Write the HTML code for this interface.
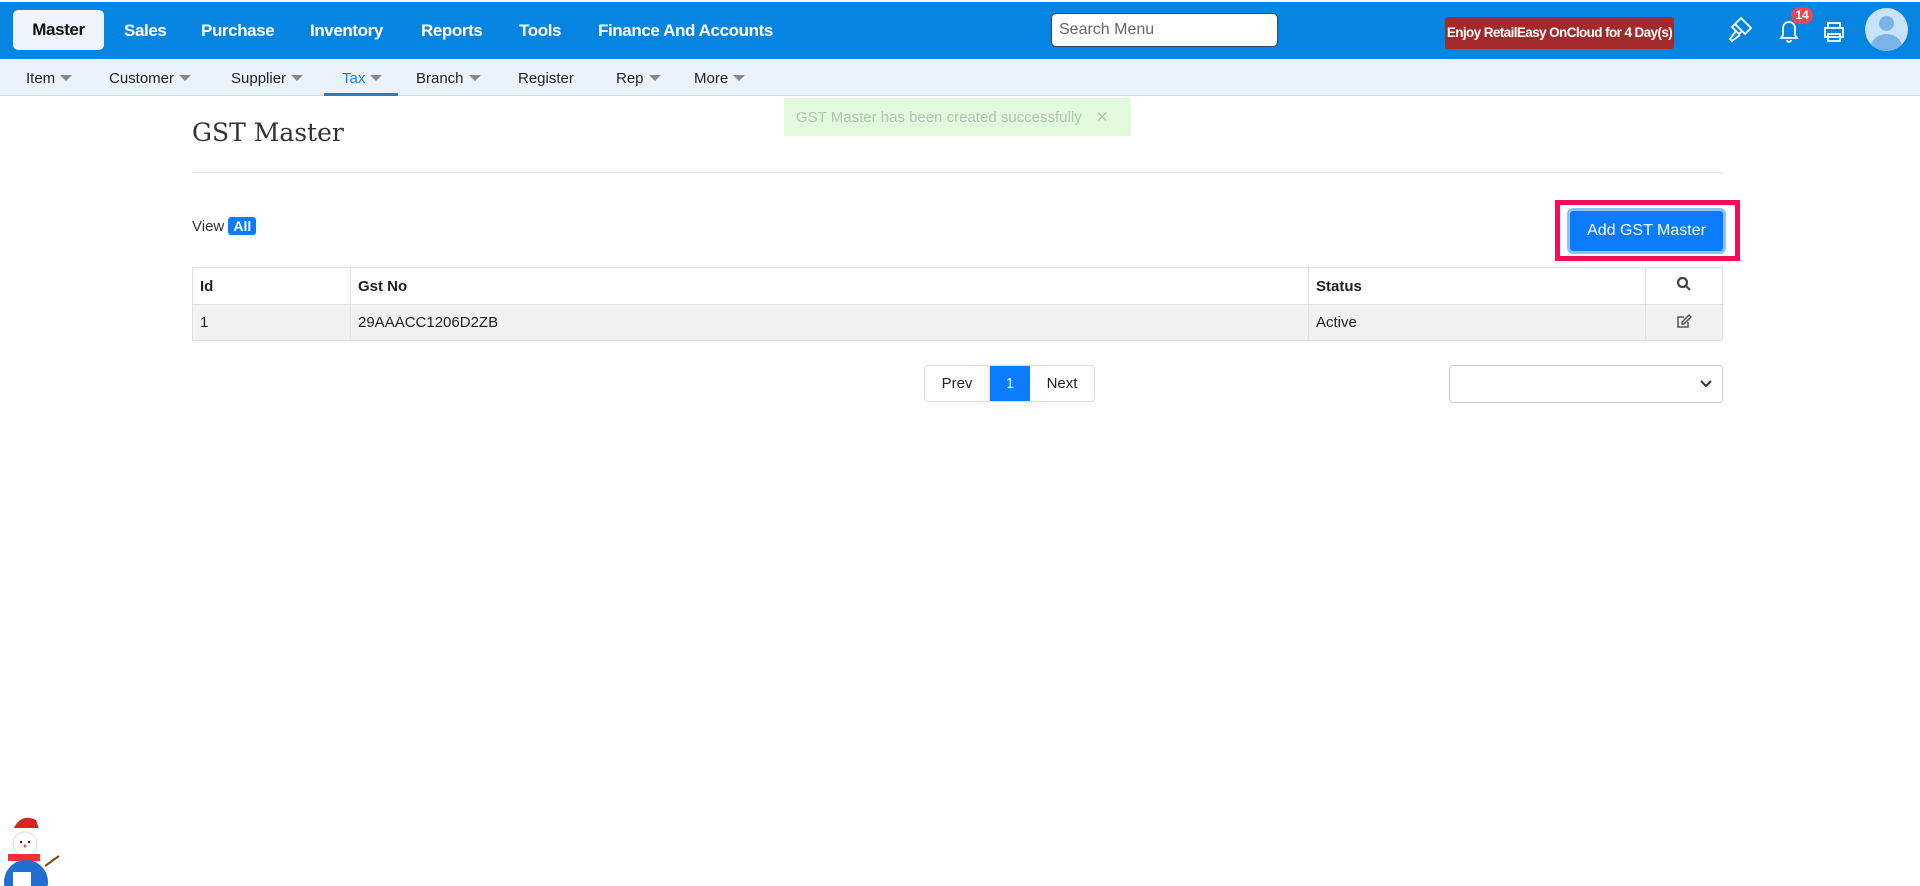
<!DOCTYPE html>
<html><head><meta charset="utf-8"><style>
*{box-sizing:border-box;margin:0;padding:0}
body{width:1920px;height:886px;position:relative;background:#fff;font-family:"Liberation Sans",sans-serif;overflow:hidden;color:#222}
.abs{position:absolute}
.top{left:0;top:2px;width:1920px;height:57px;background:#0684e2}
.nav{position:absolute;top:21px;font-size:17px;font-weight:bold;color:#fff;letter-spacing:-0.4px}
.master{left:13px;top:10px;width:91px;height:40px;background:#eef4fb;border-radius:5px;color:#111;font-weight:bold;font-size:17px;letter-spacing:-0.4px;text-align:center;line-height:40px}
.sub{left:0;top:59px;width:1920px;height:37px;background:#eaf3fc;border-bottom:1px solid #c7dced}
.si{position:absolute;top:70px;font-size:15px;color:#222}
.car{display:inline-block;width:0;height:0;border-left:6px solid transparent;border-right:6px solid transparent;border-top:6px solid #888;margin-left:5px;vertical-align:2px}
th,td{border:1px solid #dee2e6;text-align:left;font-size:15px;padding:0 7px}
</style></head><body>
<div class="abs top"></div>
<div class="abs master">Master</div>
<div class="nav" style="left:124px">Sales</div>
<div class="nav" style="left:201px">Purchase</div>
<div class="nav" style="left:310px">Inventory</div>
<div class="nav" style="left:421px">Reports</div>
<div class="nav" style="left:519px">Tools</div>
<div class="nav" style="left:598px">Finance And Accounts</div>
<div class="abs" style="left:1051px;top:13px;width:227px;height:34px;background:#fff;border:1px solid #345;border-radius:5px;font-size:16px;color:#666;padding:7px 7px">Search Menu</div>
<div class="abs" style="left:1445px;top:17px;width:229px;height:32px;background:#a32a2a;border-radius:3px;color:#fff;font-weight:bold;font-size:13.5px;letter-spacing:-0.6px;text-align:center;line-height:32px;white-space:nowrap">Enjoy RetailEasy OnCloud for 4 Day(s)</div>
<svg class="abs" style="left:1727px;top:15px" width="28" height="30" viewBox="0 0 28 30" fill="none" stroke="#fff" stroke-width="1.8"><path d="M14 3l10 10-6 6-10-10z M8 9l-3 3 4 4 3 3 3-3 M9 16l-6 8 2 2 8-6"/><path d="M17 6l2 2 M20 9l2 2"/></svg>
<svg class="abs" style="left:1776px;top:16px" width="26" height="30" viewBox="0 0 26 30" fill="none" stroke="#fff" stroke-width="1.8"><path d="M5 22h16l-2-3V12a6 6 0 0 0-12 0v7z M11 24a2 2 0 0 0 4 0"/></svg>
<div class="abs" style="left:1791px;top:7px;width:22px;height:17px;border-radius:9px;background:#f0435a;color:#fff;font-size:12px;font-weight:bold;text-align:center;line-height:17px">14</div>
<svg class="abs" style="left:1822px;top:21px" width="24" height="22" viewBox="0 0 24 22" fill="none" stroke="#fff" stroke-width="1.8"><path d="M6 7V2h12v5 M3 7h18v9H3z M6 13h12v7H6z"/></svg>
<div class="abs" style="left:1865px;top:8px;width:43px;height:43px;border-radius:50%;background:#c8e2fb;overflow:hidden"><div class="abs" style="left:14px;top:8px;width:15px;height:15px;border-radius:50%;background:#7bb3e8"></div><div class="abs" style="left:6px;top:26px;width:31px;height:26px;border-radius:50%;background:#7bb3e8"></div></div>
<div class="abs sub"></div>
<div class="si" style="left:26px">Item<span class="car"></span></div>
<div class="si" style="left:109px">Customer<span class="car"></span></div>
<div class="si" style="left:231px">Supplier<span class="car"></span></div>
<div class="si" style="left:342px;color:#1a7fd8">Tax<span class="car"></span></div>
<div class="abs" style="left:324px;top:93px;width:74px;height:3px;background:#1a7fd8"></div>
<div class="si" style="left:416px">Branch<span class="car"></span></div>
<div class="si" style="left:518px">Register</div>
<div class="si" style="left:616px">Rep<span class="car"></span></div>
<div class="si" style="left:694px">More<span class="car"></span></div>
<div class="abs" style="left:784px;top:98px;width:347px;height:38px;background:#e2fadb;color:#b5c4b3;font-size:15px;padding:10px 12px">GST Master has been created successfully <span style="margin-left:10px">✕</span></div>
<div class="abs" style="left:192px;top:118px;font-family:'DejaVu Serif',serif;font-size:25px;color:#333">GST Master</div>
<div class="abs" style="left:192px;top:172px;width:1531px;height:1px;background:#e6e6e6"></div>
<div class="abs" style="left:192px;top:217px;font-size:15px;color:#333">View <span style="display:inline-block;background:#0a7cff;color:#fff;font-weight:bold;border-radius:3px;padding:1px 5px;font-size:14px">All</span></div>
<div class="abs" style="left:1555px;top:200px;width:185px;height:61px;border:5px solid #f50d55"></div>
<div class="abs" style="left:1567px;top:208px;width:159px;height:46px;border:3px solid #8cc3f8;border-radius:6px;background:#0a7cff;color:#fff;font-size:16px;text-align:center;line-height:40px">Add GST Master</div>
<table class="abs" style="left:192px;top:267px;width:1531px;border-collapse:collapse">
<tr style="height:37px"><th style="width:158px">Id</th><th style="width:958px">Gst No</th><th style="width:337px">Status</th><th style="text-align:center"><svg width="16" height="16" viewBox="0 0 16 16" fill="none" stroke="#444" stroke-width="2.2"><circle cx="6.5" cy="6.5" r="4.5"/><path d="M10 10l4 4"/></svg></th></tr>
<tr style="height:36px;background:#f1f1f1"><td>1</td><td>29AAACC1206D2ZB</td><td>Active</td><td style="text-align:center"><svg width="16" height="16" viewBox="0 0 16 16" fill="none" stroke="#555" stroke-width="1.5"><path d="M12 9v5H2V4h6"/><path d="M13 2l2 2-7 7H6V9z"/></svg></td></tr>
</table>
<div class="abs" style="left:924px;top:365px;width:171px;height:37px;border:1px solid #ddd;border-radius:4px;font-size:15px;display:flex;overflow:hidden">
<div style="width:65px;text-align:center;line-height:35px;border-right:1px solid #ddd">Prev</div>
<div style="width:40px;text-align:center;line-height:35px;background:#0a7cff;color:#fff">1</div>
<div style="flex:1;text-align:center;line-height:35px">Next</div></div>
<div class="abs" style="left:1449px;top:365px;width:274px;height:38px;border:1px solid #ccc;border-radius:4px"><svg class="abs" style="right:10px;top:14px" width="12" height="8" viewBox="0 0 12 8" fill="none" stroke="#333" stroke-width="2"><path d="M1 1l5 5 5-5"/></svg></div>
<svg class="abs" style="left:0;top:808px" width="62" height="78" viewBox="0 0 62 78">
<path d="M12 24 Q20 4 36 12 L40 24 Z" fill="#d22"/><rect x="10" y="20" width="32" height="6" rx="3" fill="#fff"/>
<circle cx="25" cy="36" r="12" fill="#fff" stroke="#ddd"/><circle cx="21" cy="34" r="1.2" fill="#222"/><circle cx="29" cy="34" r="1.2" fill="#222"/><circle cx="25" cy="38" r="1.5" fill="#e55"/>
<rect x="8" y="46" width="32" height="7" fill="#e33"/>
<circle cx="26" cy="74" r="22" fill="#1e6fd0"/><rect x="13" y="64" width="18" height="14" fill="#fff"/><path d="M45 58l14-10" stroke="#8b4513" stroke-width="2"/>
</svg>
</body></html>
